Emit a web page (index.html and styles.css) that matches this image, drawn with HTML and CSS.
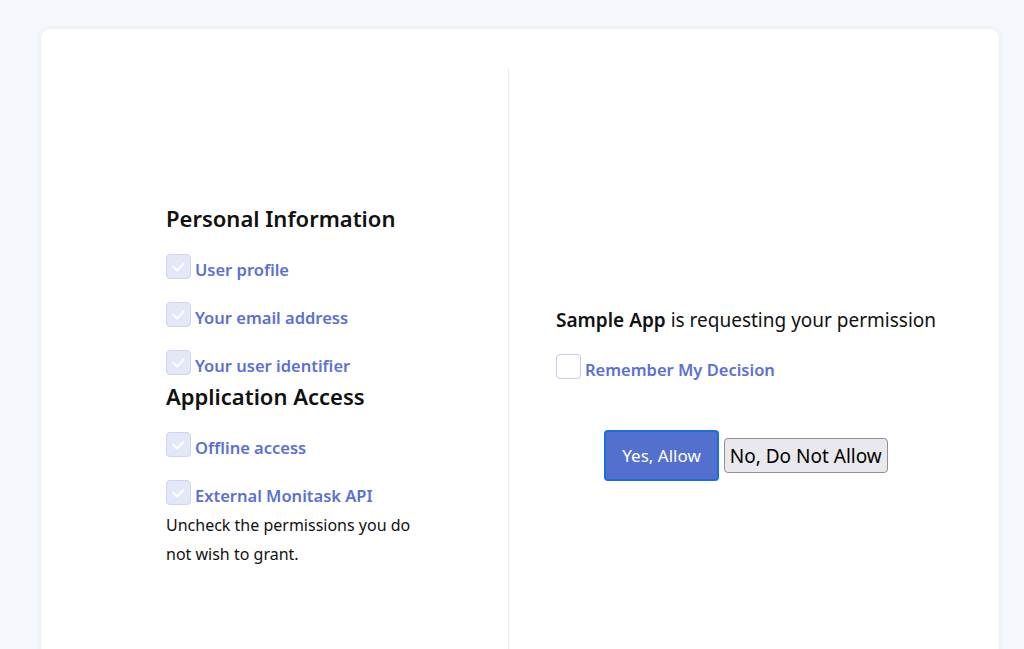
FILE: index.html
```html
<!DOCTYPE html>
<html lang="en">

<head>
  <meta charset="UTF-8">
  <meta name="viewport" content="width=device-width, initial-scale=1.0">
  <link rel="stylesheet" href="styles.css">
  <title>Consent</title>
</head>

<body>
  <div class="consent-card">
    <div class="consent-cols">
      <div class="scopes-col">
        <div class="scopes">
          <h3 class="scope-heading">Personal Information</h3>
          <label class="scope-item"><span class="check checked"></span><span class="scope-name">User profile</span></label>
          <label class="scope-item"><span class="check checked"></span><span class="scope-name">Your email address</span></label>
          <label class="scope-item last"><span class="check checked"></span><span class="scope-name">Your user identifier</span></label>

          <h3 class="scope-heading second">Application Access</h3>
          <label class="scope-item"><span class="check checked"></span><span class="scope-name">Offline access</span></label>
          <label class="scope-item last"><span class="check checked"></span><span class="scope-name">External Monitask API</span></label>

          <p class="hint">Uncheck the permissions you do not wish to grant.</p>
        </div>
      </div>

      <div class="decision-col">
        <div class="decision">
          <p class="request"><strong>Sample App</strong> is requesting your permission</p>
          <label class="scope-item remember"><span class="check"></span><span class="scope-name">Remember My Decision</span></label>
          <div class="buttons">
            <button class="btn-allow">Yes, Allow</button><button class="btn-deny">No, Do Not Allow</button>
          </div>
        </div>
      </div>
    </div>
  </div>
</body>

</html>
```

FILE: styles.css
```css
body {
  margin: 0;
  background-color: #f5f8fd;
  font-family: "Noto Sans", "Open Sans", sans-serif;
  color: #111;
}

.consent-card {
  margin: 29px 25px 0 41px;
  padding: 39px 0 0;
  background: #fff;
  border-radius: 9px;
  box-shadow: 0 0 6px rgba(40, 60, 110, 0.08);
  min-height: 700px;
}

.consent-cols {
  display: grid;
  grid-template-columns: 468px 1fr;
}

.scopes-col {
  border-right: 1px solid #ececec;
  padding: 135px 0 0 125px;
  min-height: 600px;
}

.scopes {
  width: 250px;
}

.scope-heading {
  margin: 0 0 21px;
  font-size: 22px;
  line-height: 30px;
  font-weight: 600;
}

.scope-heading.second {
  margin-top: 6px;
}

.scope-item {
  display: flex;
  align-items: center;
  height: 25px;
  margin-bottom: 23px;
}

.scope-item.last {
  margin-bottom: 0;
}

.scope-name {
  margin-left: 4px;
  padding-top: 5px;
  color: #5b70d4;
  font-size: 16.5px;
  font-weight: 600;
}

.check {
  position: relative;
  width: 23px;
  height: 23px;
  flex: none;
  border: 1px solid #c3c9ef;
  border-radius: 4px;
  background: #fff;
}

.check.checked {
  background: #e4e7f8;
  border-color: #cfd4f3;
}

.check.checked::after {
  content: "";
  position: absolute;
  left: 8px;
  top: 5px;
  width: 5px;
  height: 9px;
  border: solid #fff;
  border-width: 0 2px 2px 0;
  transform: rotate(45deg);
}

.hint {
  margin: 6px 0 0;
  font-size: 16px;
  line-height: 29px;
}

.decision-col {
  padding: 239px 0 0 47px;
}

.decision {
  display: inline-block;
}

.request {
  margin: 0 0 20px;
  font-size: 19px;
  line-height: 27px;
}

.request strong {
  font-weight: 600;
}

.remember {
  margin-bottom: 51px;
}

.buttons {
  display: flex;
  justify-content: center;
  align-items: center;
}

.btn-allow {
  height: 51px;
  padding: 0 16px;
  border: 2px solid #1a6ee0;
  border-radius: 4px;
  background: #5470cf;
  color: #fff;
  font-family: inherit;
  font-size: 17px;
}

.btn-deny {
  height: 35px;
  margin-left: 5px;
  padding: 0 5px;
  border: 1px solid #8f8f9d;
  border-radius: 4px;
  background: #e9e9ed;
  color: #000;
  font-family: inherit;
  font-size: 19px;
}
```
